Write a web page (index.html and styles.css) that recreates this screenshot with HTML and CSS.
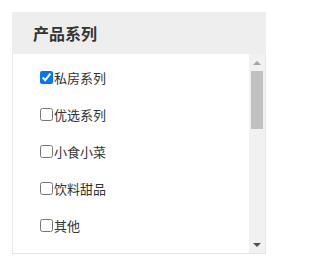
FILE: index.html
```html
<!DOCTYPE html>
<html>
<head>
<meta charset="utf-8">
<link rel="stylesheet" href="styles.css">
</head>
<body>
<div class="panel">
  <div class="panel-head">产品系列</div>
  <div class="panel-body">
    <ul class="options">
      <li class="option"><label><input type="checkbox" checked>私房系列</label></li>
      <li class="option"><label><input type="checkbox">优选系列</label></li>
      <li class="option"><label><input type="checkbox">小食小菜</label></li>
      <li class="option"><label><input type="checkbox">饮料甜品</label></li>
      <li class="option"><label><input type="checkbox">其他</label></li>
    </ul>
    <div class="scrollbar">
      <div class="sb-btn"><span class="arrow-up"></span></div>
      <div class="sb-track"><div class="sb-thumb"></div></div>
      <div class="sb-btn"><span class="arrow-down"></span></div>
    </div>
  </div>
</div>
</body>
</html>
```
FILE: styles.css
```css
html, body {
  margin: 0;
  padding: 0;
  background: #ffffff;
}
body {
  font-family: "Noto Sans CJK SC", "Liberation Sans", sans-serif;
  color: #333333;
}
.panel {
  margin: 12px 0 0 12px;
  width: 254px;
}
.panel-head {
  height: 42px;
  line-height: 42px;
  background: #eeeeee;
  padding-left: 21px;
  font-size: 16px;
  font-weight: bold;
  color: #333333;
}
.panel-body {
  display: flex;
  height: 199px;
  border: 1px solid #e6e6e6;
  border-top: none;
}
.options {
  flex: 1;
  list-style: none;
  margin: 0;
  padding: 5px 0 0 27px;
}
.option {
  height: 37px;
  display: flex;
  align-items: center;
  font-size: 13px;
  color: #333333;
}
.option label {
  display: flex;
  align-items: center;
}
.option input {
  margin: 0 1px 0 0;
  width: 13px;
  height: 13px;
}
.scrollbar {
  width: 16px;
  background: #f1f1f1;
  display: flex;
  flex-direction: column;
}
.sb-btn {
  height: 17px;
  display: flex;
  align-items: center;
  justify-content: center;
}
.arrow-up {
  width: 0;
  height: 0;
  border-left: 4px solid transparent;
  border-right: 4px solid transparent;
  border-bottom: 4px solid #a3a3a3;
}
.arrow-down {
  width: 0;
  height: 0;
  border-left: 4px solid transparent;
  border-right: 4px solid transparent;
  border-top: 4px solid #505050;
}
.sb-track {
  flex: 1;
  padding: 0 2px;
}
.sb-thumb {
  height: 58px;
  background: #c1c1c1;
}
```
